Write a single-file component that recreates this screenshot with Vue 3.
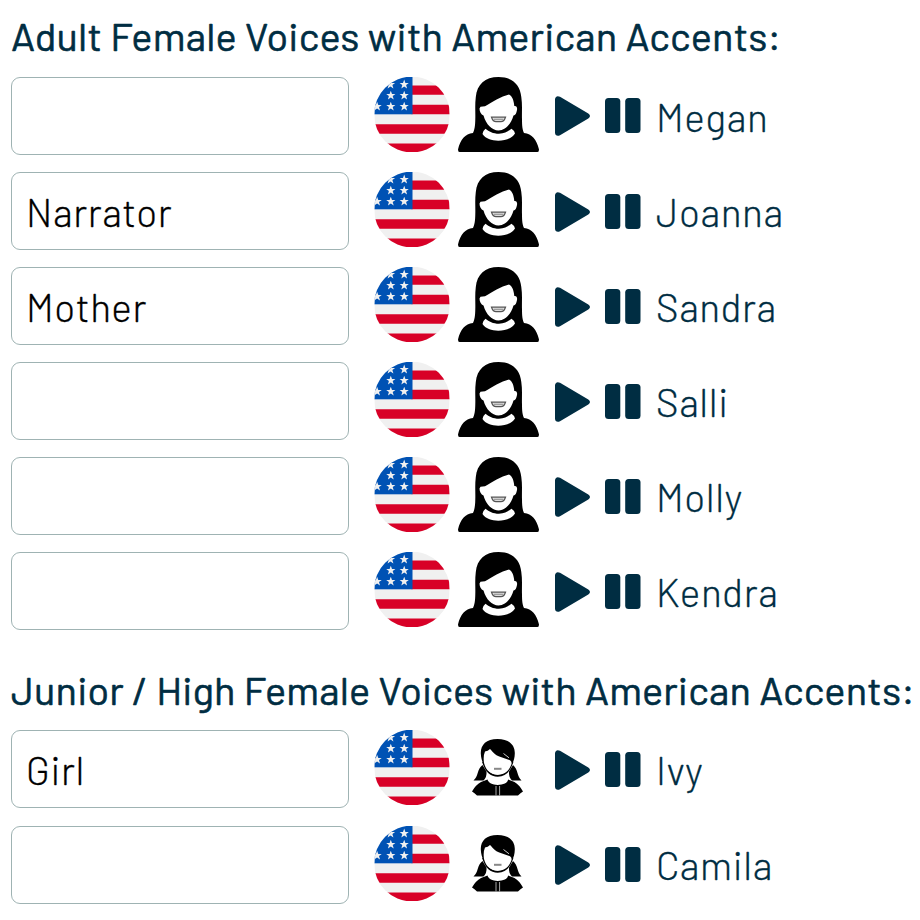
<template>
  <div class="voices">
    <!-- shared icon shapes -->
    <svg class="sprite" width="0" height="0" aria-hidden="true">
      <defs>
        <clipPath id="round"><circle cx="37.5" cy="37.5" r="37.9" /></clipPath>
        <path id="star" d="M0-4.8 1.2-1.5 4.6-1.5 1.9.6 2.9 4 0 2-2.9 4-1.9.6-4.6-1.5-1.2-1.5Z" />
        <symbol id="flag" viewBox="0 0 75 75">
          <g clip-path="url(#round)">
            <rect width="75" height="75" fill="#f0f0f0" />
            <path fill="#d80027" d="M37 8.5h38v9.3H37zM37 27.7h38v9.6H37zM0 47.2h75v9.5H0zM0 66.4h75V75H0z" />
            <rect width="38" height="37.3" fill="#0052b4" />
            <g fill="#f0f0f0">
              <use href="#star" x="16" y="7.4" />
              <use href="#star" x="29.7" y="7.4" />
              <use href="#star" x="16.3" y="18.5" />
              <use href="#star" x="29.7" y="18.5" />
              <use href="#star" x="2.6" y="29.5" />
              <use href="#star" x="16.3" y="29.5" />
              <use href="#star" x="29.7" y="29.5" />
            </g>
          </g>
        </symbol>
        <symbol id="adult" viewBox="0 0 81 75">
          <path d="M40.500 0C27 0 19 7.500 17.800 20C16.800 28 17.500 35 17.300 42C17.200 49 16.500 53 15 56C7 57 2.500 62 0 72.500Q0 75 1.500 75H79.500Q81 75 81 72.500C78.500 62 74 57 66 56C64.500 53 64 49 64 42C63.700 35 64.500 28 63.300 20C62 7.500 54 0 40.500 0Z" />
          <path fill="#fff" d="M22.500 29.700L27 29.300C34 25 43 19.500 51 17.500C54 19 55.800 23 56.300 29C58.500 28.500 59.500 30.500 59 33C58.300 36.500 57.500 38 55.500 38.500C53 47.500 47 53.300 40.500 53.500C34 53.300 28 47.500 25.500 38.500C23 37.500 21.500 34.500 21.500 31.500Z" />
          <path fill="#fff" d="M27.500 51.700C31 54.500 35 56.700 41 56.700C47 56.700 50 54.500 53.500 51.700Q56.500 53.500 57 56.500C51 66 30 66 24.500 57Q25 53.500 27.500 51.700Z" />
          <path fill="#ddd" stroke="#555" stroke-width="1.200" d="M33.500 40.200H47.500Q46 44.700 43 44.700H38Q35 44.700 33.500 40.200Z" />
          <path d="M36 42.300H45" stroke="#777" stroke-width=".8" />
        </symbol>
        <symbol id="junior" viewBox="0 0 51 57">
          <path d="M25.500 0C14 0 8.500 6 8.800 14.500C9 19 10 22 11.500 25.500H40C41.800 22 42.700 19 42.800 14.500C43 6 37 0 25.500 0Z" />
          <path d="M10.500 26L14.500 32.500Q15 38 11.500 41.500H1.500C6.500 37.500 5 30 10.500 26Z" />
          <path d="M41 26L37 32.500Q36.500 38 40 41.500H49.500C45 37.500 46 30 41 26Z" />
          <path fill="#fff" stroke="#000" stroke-width="2" d="M11.500 24C14 32 19 36.700 25.700 36.700S37.500 32 40 24Z" />
          <path fill="#fff" d="M12 24Q11 17 13 12.500Q16 12 18 10C21 13 22.500 16 28 17.800L38 21.200Q40 22.500 39.500 25C37 32.500 32 35.700 25.700 35.700S14 32 12 24Z" />
          <path d="M15.500 40.500L9 43Q3.500 46 0 52.500Q2.500 54 5 56.500H46Q48.500 54 51 52.500Q47.500 46 42.500 43L36 40.500C36 44 31 45.500 25.700 46C20.500 45.500 16.500 44 15.500 40.500Z" />
          <path d="M31.500 14.500 37 18.800" stroke="#fff" stroke-width=".8" />
          <path d="M22 29.800H29.500" stroke="#888" stroke-width="2" />
          <path d="M24 47V56.500M27.600 47V56.500" stroke="#bbb" stroke-width=".9" />
        </symbol>
      </defs>
    </svg>

    <section v-for="group in groups" :key="group.title" class="group">
      <h2>{{ group.title }}</h2>
      <div v-for="voice in group.voices" :key="voice.name" class="row">
        <input type="text" v-model="voice.character">
        <svg class="flag"><use href="#flag" /></svg>
        <div class="person">
          <svg :class="group.icon"><use :href="'#' + group.icon" /></svg>
        </div>
        <svg class="play" viewBox="0 0 35 40" @click="playing = voice.name">
          <path d="M0 3.500C0 .5 2.500-.7 5 .8L33.300 17.500Q36.700 20 33.300 22.500L5 39.200C2.500 40.700 0 39.500 0 36.500Z" />
        </svg>
        <svg class="pause" viewBox="0 0 36 35" @click="playing = null">
          <rect width="15.300" height="35" rx="3.500" />
          <rect x="20.200" width="15.300" height="35" rx="3.500" />
        </svg>
        <span class="name">{{ voice.name }}</span>
      </div>
    </section>
  </div>
</template>

<script setup>
import { ref } from 'vue';

const playing = ref(null);

const groups = ref([
  {
    title: 'Adult Female Voices with American Accents:',
    icon: 'adult',
    voices: [
      { name: 'Megan', character: '' },
      { name: 'Joanna', character: 'Narrator' },
      { name: 'Sandra', character: 'Mother' },
      { name: 'Salli', character: '' },
      { name: 'Molly', character: '' },
      { name: 'Kendra', character: '' },
    ],
  },
  {
    title: 'Junior / High Female Voices with American Accents:',
    icon: 'junior',
    voices: [
      { name: 'Ivy', character: 'Girl' },
      { name: 'Camila', character: '' },
    ],
  },
]);
</script>

<style>
body {
  background: #fff;
  overflow: hidden;
}
</style>

<style scoped>
.voices {
  height: 920px;
  padding: 10.2px 0 0 11px;
  box-sizing: border-box;
  overflow: hidden;
  font-family: Barlow, Roboto, "Liberation Sans", sans-serif;
  color: #002d42;
}

.sprite {
  position: absolute;
}

.group {
  margin-bottom: 16.1px;
}

h2 {
  height: 66.8px;
  margin: 0;
  font-size: 39.7px;
  font-weight: 400;
  letter-spacing: 0.19px;
  line-height: 50px;
  white-space: nowrap;
  -webkit-text-stroke: 0.6px #002d42;
}

.row {
  display: flex;
  align-items: flex-start;
  height: 95.1px;
}

input {
  width: 338px;
  height: 78px;
  margin: 0 25px 0 0;
  padding: 0 15px 0 14px;
  box-sizing: border-box;
  border: 1px solid #9fb3b3;
  border-radius: 9px;
  outline: none;
  background: #fff;
  color: #000;
  font-family: inherit;
  font-size: 38.7px;
  font-weight: 300;
  letter-spacing: 0.65px;
  -webkit-text-stroke: 0.3px #000;
}

.flag {
  width: 76px;
  height: 75px;
  margin-right: 8px;
}

.person {
  display: flex;
  justify-content: center;
  width: 81px;
  margin-right: 16px;
}

.adult {
  width: 81px;
  height: 75px;
}

.junior {
  width: 51px;
  height: 57px;
  margin: 9px 2px 0 0;
}

.play,
.pause {
  fill: #002d42;
  cursor: pointer;
}

.play {
  width: 35px;
  height: 40px;
  margin: 19.45px 15px 0 0;
}

.pause {
  width: 36px;
  height: 35px;
  margin: 21.45px 15px 0 0;
}

.name {
  margin-top: 14.6px;
  font-size: 38.7px;
  font-weight: 300;
  letter-spacing: 0.65px;
  line-height: 50px;
  -webkit-text-stroke: 0.3px #002d42;
}
</style>
